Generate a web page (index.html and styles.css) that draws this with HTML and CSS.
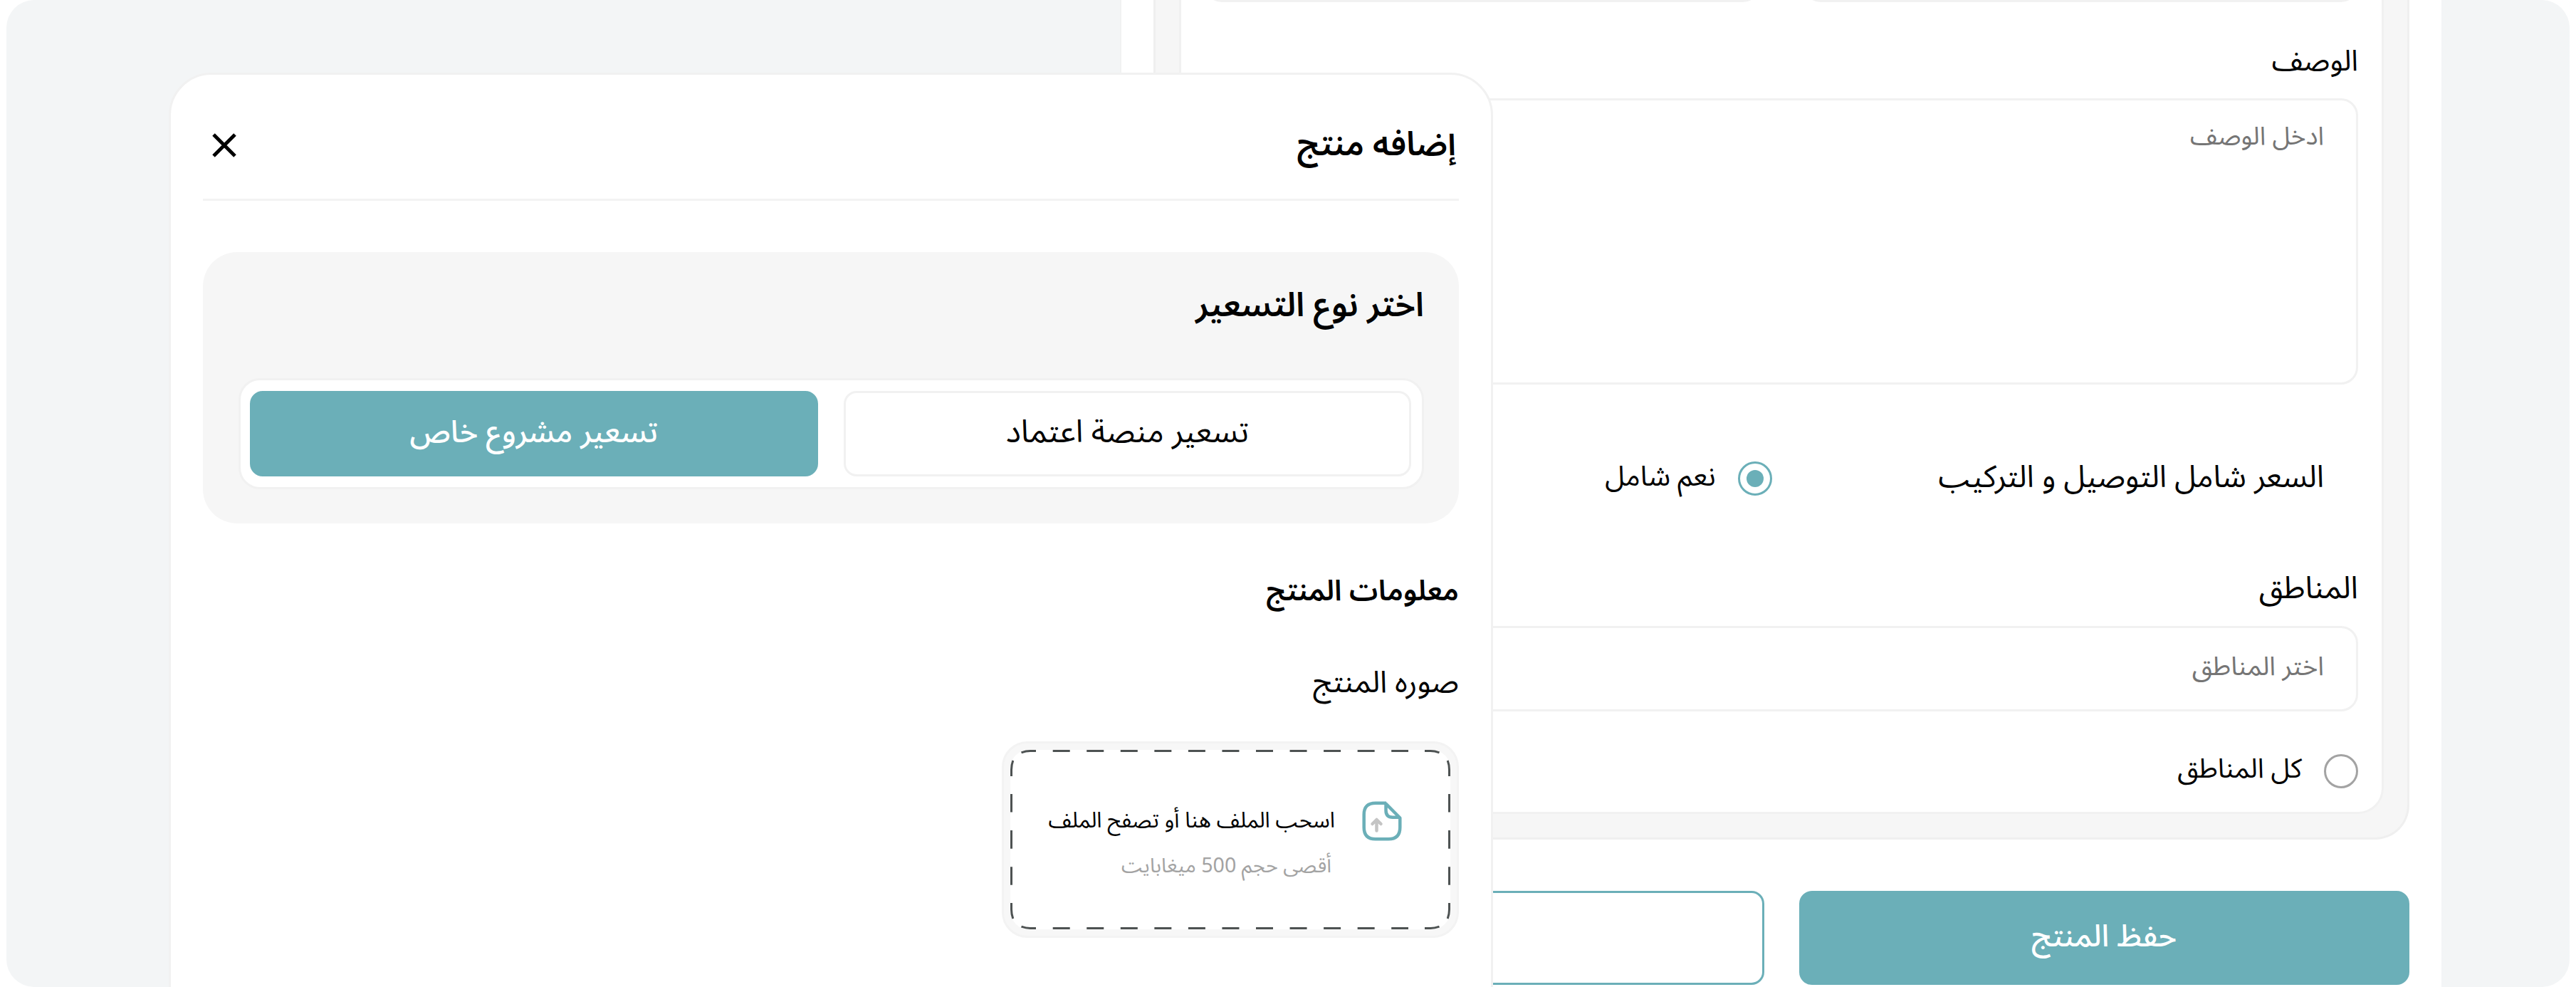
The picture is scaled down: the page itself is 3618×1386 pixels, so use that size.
FILE: index.html
```html
<!DOCTYPE html>
<html lang="ar" dir="rtl">
<head>
<meta charset="utf-8">
<title>إضافه منتج</title>
<link rel="stylesheet" href="styles.css">
</head>
<body>
<div class="frame">
  <main class="page">
    <section class="card">
      <div class="card-body">
        <div class="field-row">
          <div class="field-stub"></div>
          <div class="field-stub"></div>
        </div>
        <div class="label label-desc">الوصف</div>
        <div class="textarea"><span class="placeholder">ادخل الوصف</span></div>
        <div class="delivery">
          <span class="delivery-title">السعر شامل التوصيل و التركيب</span>
          <span class="radio radio-on"></span>
          <span class="delivery-option">نعم شامل</span>
        </div>
        <div class="label label-regions">المناطق</div>
        <div class="select"><span class="placeholder placeholder-regions">اختر المناطق</span></div>
        <div class="all-regions">
          <span class="radio"></span>
          <span class="all-regions-text">كل المناطق</span>
        </div>
      </div>
    </section>
    <div class="actions">
      <div class="btn btn-primary"><span class="btn-text">حفظ المنتج</span></div>
      <div class="btn btn-outline"></div>
    </div>
  </main>

  <div class="modal">
    <header class="modal-head">
      <h1 class="modal-title">إضافه منتج</h1>
      <svg class="close" viewBox="0 0 34 34"><path d="M2 2 32 32M32 2 2 32"/></svg>
    </header>
    <section class="pricing">
      <h2 class="pricing-title">اختر نوع التسعير</h2>
      <div class="segmented">
        <div class="segment"><span class="segment-text">تسعير منصة اعتماد</span></div>
        <div class="segment segment-active"><span class="segment-text segment-text-active">تسعير مشروع خاص</span></div>
      </div>
    </section>
    <h3 class="info-title">معلومات المنتج</h3>
    <div class="image-label">صوره المنتج</div>
    <div class="upload">
      <svg class="dashes" viewBox="0 0 618 252">
        <path d="M59.7 1.5H559M59.7 250.5H559" stroke-dasharray="24 23.55"/>
        <path d="M1.5 62V190M616.5 62V190" stroke-dasharray="25.6 25.5"/>
        <path d="M15.5 3.8Q22 1.5 28 1.5H36M582 1.5H590Q596 1.5 602.5 3.8M15.5 248.2Q22 250.5 28 250.5H36M582 250.5H590Q596 250.5 602.5 248.2M3.8 15Q1.5 21 1.5 28V37M614.2 15Q616.5 21 616.5 28V37M3.8 237Q1.5 231 1.5 224V215M614.2 237Q616.5 231 616.5 224V215"/>
      </svg>
      <div class="upload-content">
        <svg class="file-icon" viewBox="0 0 56 56">
          <path class="file-line" d="M34 2.7H19Q2.7 2.7 2.7 19V37Q2.7 53.3 19 53.3H37Q53.3 53.3 53.3 37V23.5L33.5 3.7V13Q33.5 22.7 43 22.7H53"/>
          <path class="file-arrow" d="M20.5 41.5V27M14.5 32 20.5 26 26.5 32"/>
        </svg>
        <div class="upload-texts">
          <div class="upload-main">اسحب الملف هنا أو تصفح الملف</div>
          <div class="upload-sub">أقصى حجم 500 ميغابايت</div>
        </div>
      </div>
    </div>
  </div>
</div>
</body>
</html>
```
FILE: styles.css
```css
* { box-sizing: border-box; }
body {
  margin: 0;
  background: #fff;
  color: #000;
  font-family: "Noto Sans Arabic", "DejaVu Sans", sans-serif;
  line-height: 60px;
  white-space: nowrap;
}
h1, h2, h3 { margin: 0; font-weight: 600; }

.frame {
  position: relative;
  height: 1386px;
  margin: 0 9px;
  padding-right: 180px;
  border-radius: 39px;
  background: #f3f5f6;
  overflow: hidden;
}

/* Form page */
.page {
  width: 1856px;
  height: 1386px;
  padding: 0 45px;
  border-left: 2px solid #f1f2f2;
  background: #fff;
}
.card {
  height: 1179px;
  padding: 0 33px 33px;
  border: 3px solid #efefef;
  border-top: 0;
  border-radius: 0 0 48px 48px;
  background: #f6f6f6;
}
.card-body {
  height: 1143px;
  padding: 0 33px 33px;
  border: 3px solid #f1f1f1;
  border-top: 0;
  border-radius: 0 0 36px 36px;
  background: #fff;
  overflow: hidden;
}
.field-row { display: flex; gap: 61px; height: 60px; margin-top: -57px; }
.field-stub { flex: 1; border: 3px solid #f1f1f1; border-radius: 24px; }
.label-desc { margin-top: 53px; font-size: 40.8px; }
.textarea {
  height: 402px;
  margin-top: 22px;
  padding: 24px 45px;
  border: 3px solid #f1f1f1;
  border-radius: 24px;
  line-height: 54px;
}
.placeholder { color: #757575; font-size: 35.7px; }
.delivery {
  display: flex;
  align-items: center;
  height: 60px;
  margin-top: 102px;
  padding-right: 48px;
}
.delivery-title { margin: 0 0 3px 234px; font-size: 43.2px; }
.delivery-option { margin: 0 31px 5px 0; font-size: 39.4px; }
.radio {
  flex: none;
  width: 48px;
  height: 48px;
  border: 3px solid #a3a3a3;
  border-radius: 50%;
}
.radio-on {
  padding: 9px;
  border-color: #6bafb8;
  background: #6bafb8 content-box;
}
.label-regions { margin-top: 94px; font-size: 43.6px; }
.select {
  display: flex;
  align-items: center;
  height: 120px;
  margin-top: 23px;
  padding: 0 45px;
  border: 3px solid #f1f1f1;
  border-radius: 24px;
}
.placeholder-regions { margin-bottom: 5px; font-size: 36.7px; }
.all-regions { display: flex; align-items: center; height: 48px; margin-top: 60px; }
.all-regions-text { margin: 0 31px 6px 0; font-size: 38px; }

.actions { display: flex; gap: 49px; margin-top: 72px; }
.btn {
  display: flex;
  flex: 1;
  align-items: center;
  justify-content: center;
  height: 132px;
  border: 3px solid #6bafb8;
  border-radius: 18px;
}
.btn-primary { background: #6bafb8; color: #fff; }
.btn-text { margin-bottom: 3px; font-size: 43px; font-weight: 500; }

/* Dialog over the page */
.modal {
  position: absolute;
  top: 102px;
  left: 228px;
  width: 1860px;
  height: 1340px;
  padding: 0 45px;
  border: 3px solid #f1f1f1;
  border-radius: 60px;
  background: #fff;
}
.modal-head {
  display: flex;
  align-items: center;
  justify-content: space-between;
  height: 177px;
  border-bottom: 3px solid #f3f3f3;
}
.modal-title { margin: 22px 4px 0 0; font-size: 46.3px; }
.close {
  width: 34px;
  height: 34px;
  margin: 24px 0 0 13px;
  fill: none;
  stroke: #000;
  stroke-width: 5;
}
.pricing {
  height: 381px;
  margin-top: 72px;
  padding: 45px 49px 48px 50px;
  border-radius: 48px;
  background: #f6f6f6;
}
.pricing-title { font-size: 47px; }
.segmented {
  display: flex;
  gap: 36px;
  height: 156px;
  margin-top: 72px;
  padding: 15px 15px 15px 13px;
  border: 3px solid #f1f1f1;
  border-radius: 30px;
  background: #fff;
}
.segment {
  display: flex;
  flex: 1;
  align-items: center;
  justify-content: center;
  border: 3px solid #f1f1f1;
  border-radius: 18px;
}
.segment-active { border-color: #6bafb8; background: #6bafb8; color: #fff; }
.segment-text { margin-bottom: 4px; font-size: 44.2px; }
.segment-text-active { margin-bottom: 3px; font-size: 42.8px; font-weight: 500; }
.info-title { margin-top: 65px; font-size: 40.4px; }
.image-label { margin-top: 68px; font-size: 42.6px; }

.upload {
  position: relative;
  width: 642px;
  height: 276px;
  margin-top: 53px;
  padding: 9px;
  border: 3px solid #f3f3f3;
  border-radius: 36px;
  background: #f7f7f7;
}
.dashes {
  position: absolute;
  top: 9px;
  left: 9px;
  width: 618px;
  height: 252px;
  fill: none;
  stroke: #4d5252;
  stroke-width: 3;
}
.upload-content {
  display: flex;
  gap: 38px;
  height: 252px;
  padding: 69px 68px 0 0;
  border-radius: 26px;
  background: #fff;
}
.file-icon { flex: none; width: 56px; height: 56px; margin-top: 3px; fill: none; }
.file-line { stroke: #6bafb8; stroke-width: 4.5; stroke-linejoin: round; }
.file-arrow { stroke: #c4c4c4; stroke-width: 4.5; stroke-linecap: round; stroke-linejoin: round; }
.upload-main { font-size: 30.3px; }
.upload-sub { margin: 4px 5px 0 0; color: #a3a3a3; font-size: 28.6px; }
```
